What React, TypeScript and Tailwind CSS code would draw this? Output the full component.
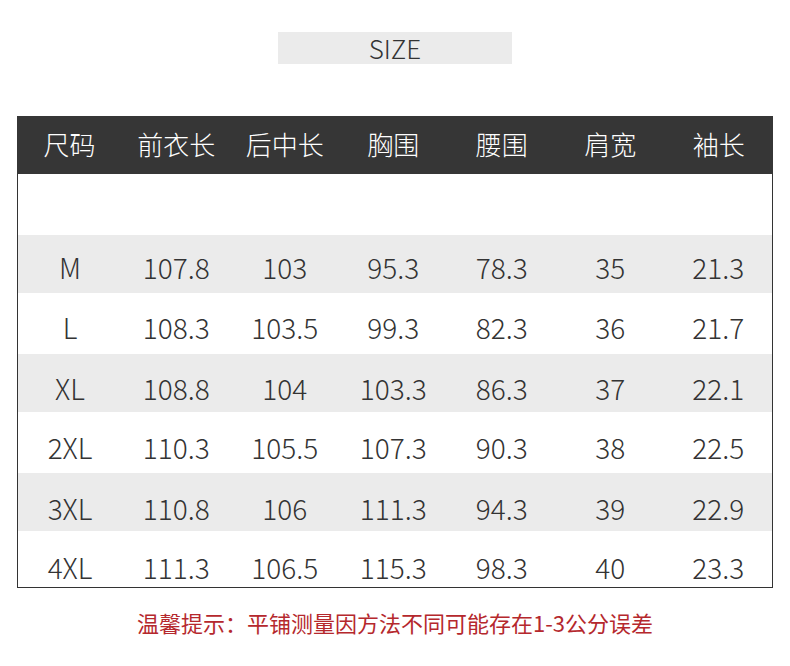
import React from "react";

const headers = ["尺码", "前衣长", "后中长", "胸围", "腰围", "肩宽", "袖长"];
const rows: { cells: string[]; h: string; bg: string; pt: string }[] = [
  { cells: ["M", "107.8", "103", "95.3", "78.3", "35", "21.3"], h: "h-[58px]", bg: "bg-[#ebebeb]", pt: "pt-[6px]" },
  { cells: ["L", "108.3", "103.5", "99.3", "82.3", "36", "21.7"], h: "h-[61px]", bg: "bg-white", pt: "pt-[7px]" },
  { cells: ["XL", "108.8", "104", "103.3", "86.3", "37", "22.1"], h: "h-[58px]", bg: "bg-[#ebebeb]", pt: "pt-[9px]" },
  { cells: ["2XL", "110.3", "105.5", "107.3", "90.3", "38", "22.5"], h: "h-[61px]", bg: "bg-white", pt: "pt-[9px]" },
  { cells: ["3XL", "110.8", "106", "111.3", "94.3", "39", "22.9"], h: "h-[58px]", bg: "bg-[#ebebeb]", pt: "pt-[11px]" },
  { cells: ["4XL", "111.3", "106.5", "115.3", "98.3", "40", "23.3"], h: "h-[57px]", bg: "bg-white", pt: "pt-[16px]" },
];

export default function App() {
  return (
    <div
      className="w-[790px] h-[666px] bg-white overflow-hidden"
      style={{ fontFamily: '"Noto Sans CJK SC", "Noto Sans", sans-serif' }}
    >
      <div className="pt-[32px] flex justify-center">
        <div className="w-[234px] h-[32px] bg-[#ebebeb] flex items-center justify-center text-[26px] font-light text-[#333] leading-none">
          SIZE
        </div>
      </div>
      <div className="mt-[52px] ml-[17px] w-[756px]">
        <div className="h-[58px] bg-[#363636] grid grid-cols-[105px_repeat(6,1fr)] items-center pb-[3px]">
          {headers.map((h) => (
            <div key={h} className="text-center text-white text-[26px] font-light leading-none">
              {h}
            </div>
          ))}
        </div>
        <div className="h-[61px] bg-white border-x border-[#333]" />
        {rows.map((r, i) => (
          <div
            key={i}
            className={`${r.h} ${r.bg} grid grid-cols-[105px_repeat(6,1fr)] items-stretch ${
              i === rows.length - 1 ? "border-b border-[#333]" : ""
            }`}
          >
            {r.cells.map((c, j) => (
              <div
                key={j}
                className={`flex items-center justify-center text-[#333] text-[28px] font-light leading-none ${r.pt} ${
                  j === 0 ? "border-l border-[#333]" : ""
                } ${j === 6 ? "border-r border-[#333]" : ""}`}
              >
                {c}
              </div>
            ))}
          </div>
        ))}
      </div>
      <div className="mt-[23px] text-center text-[#b5282d] text-[22px] leading-none">
        温馨提示：平铺测量因方法不同可能存在1-3公分误差
      </div>
    </div>
  );
}
